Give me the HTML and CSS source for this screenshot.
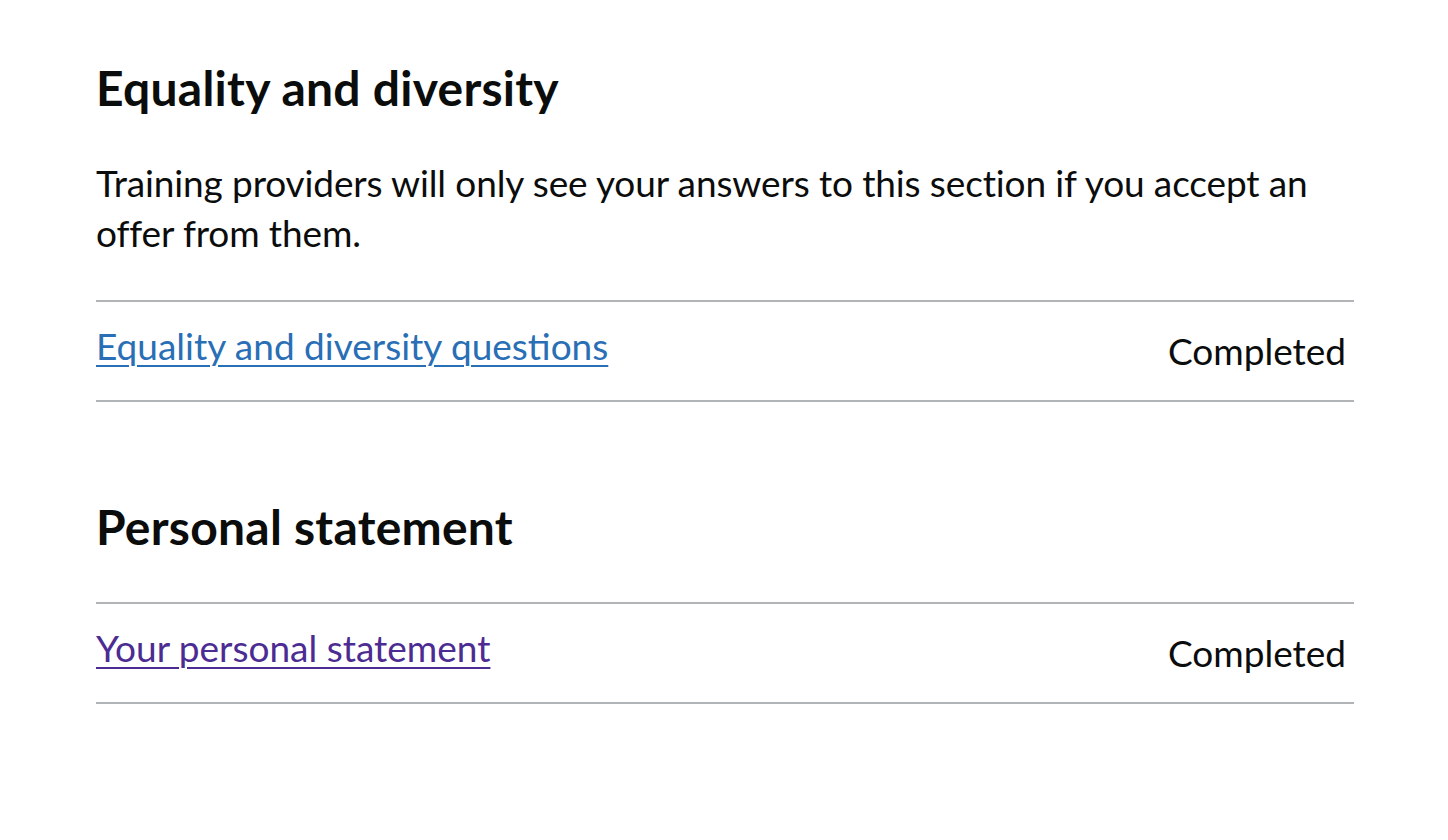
FILE: index.html
```html
<!DOCTYPE html>
<html lang="en">
<head>
<meta charset="utf-8">
<title>Task list</title>
<link rel="stylesheet" href="styles.css">
</head>
<body>
<main class="page">
  <section class="section">
    <h2 class="heading">Equality and diversity</h2>
    <p class="body">Training providers will only see your answers to this section if you accept an offer from them.</p>
    <ul class="task-list">
      <li class="task">
        <a class="task-link" href="#equality">Equality and diversity questions</a>
        <span class="task-status">Completed</span>
      </li>
    </ul>
  </section>
  <section class="section section--next">
    <h2 class="heading heading--tight">Personal statement</h2>
    <ul class="task-list">
      <li class="task">
        <a class="task-link task-link--visited" href="#statement">Your personal statement</a>
        <span class="task-status">Completed</span>
      </li>
    </ul>
  </section>
</main>
</body>
</html>
```
FILE: styles.css
```css
html, body {
  margin: 0;
  padding: 0;
  background: #ffffff;
}

body {
  font-family: Lato, "Noto Sans", sans-serif;
  color: #0b0c0c;
}

.page {
  width: 1258px;
  padding: 58px 0 0 96px;
}

.heading {
  margin: 0 0 40px;
  font-size: 48px;
  line-height: 60px;
  font-weight: 700;
  letter-spacing: 0.25px;
  color: #0b0c0c;
}

.heading--tight {
  margin-bottom: 45px;
}

.body {
  margin: 0 0 42px;
  font-size: 37px;
  line-height: 50px;
  letter-spacing: -0.12px;
}

.section--next {
  margin-top: 95px;
}

.task-list {
  list-style: none;
  margin: 0;
  padding: 0;
  border-top: 2px solid #b1b4b6;
}

.task {
  display: flex;
  justify-content: space-between;
  align-items: flex-start;
  height: 98px;
  border-bottom: 2px solid #b1b4b6;
  font-size: 37px;
  line-height: 50px;
}

.task-link {
  padding-top: 19px;
  color: #2a6fb5;
  text-decoration: underline;
  text-decoration-thickness: 2px;
  text-underline-offset: 5px;
}

.task-link--visited {
  color: #4c2c92;
}

.task-status {
  padding-top: 24px;
  padding-right: 8px;
  color: #0b0c0c;
}
```
